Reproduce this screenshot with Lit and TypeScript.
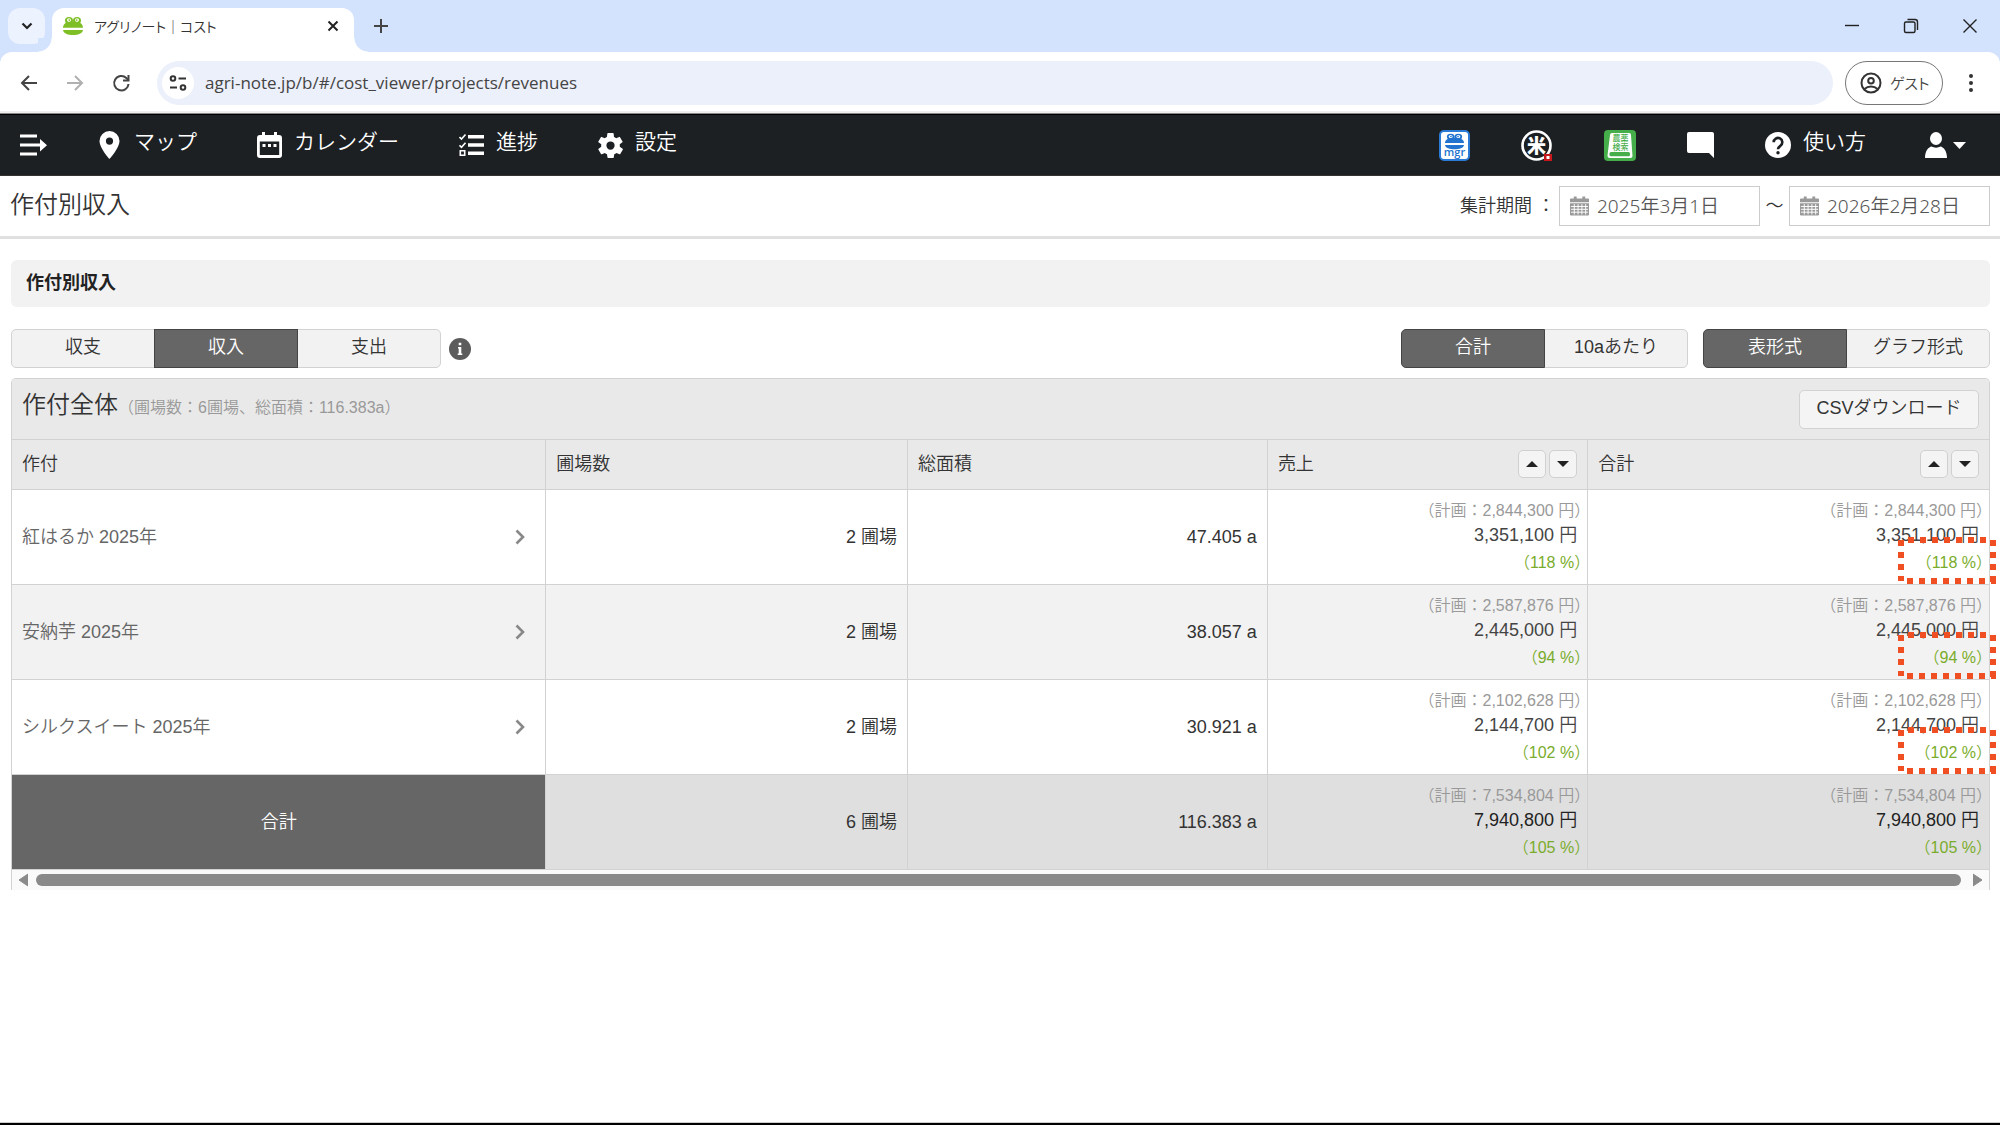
import { LitElement, html, css, svg } from "lit";
import { customElement, state } from "lit/decorators.js";
import { classMap } from "lit/directives/class-map.js";

interface Row {
  name: string;
  fields: string;
  area: string;
  plan: string;
  actual: string;
  rate: string;
}

const ROWS: Row[] = [
  { name: "紅はるか 2025年", fields: "2 圃場", area: "47.405 a", plan: "2,844,300", actual: "3,351,100", rate: "118" },
  { name: "安納芋 2025年", fields: "2 圃場", area: "38.057 a", plan: "2,587,876", actual: "2,445,000", rate: "94" },
  { name: "シルクスイート 2025年", fields: "2 圃場", area: "30.921 a", plan: "2,102,628", actual: "2,144,700", rate: "102" },
];

const TOTAL: Row = { name: "合計", fields: "6 圃場", area: "116.383 a", plan: "7,534,804", actual: "7,940,800", rate: "105" };

const frog = (body: string, eye: string) => svg`
  <g fill=${body}>
    <circle cx="7" cy="5" r="4"/><circle cx="15" cy="5" r="4"/>
    <path d="M1 13C1 8 5 6 11 6s10 2 10 7z"/>
    <path d="M1 15.500h20C20.500 19.500 16 21 11 21S1.500 19.500 1 15.500z"/>
  </g>
  <g fill=${eye}><circle cx="7" cy="4.500" r="2"/><circle cx="15" cy="4.500" r="2"/></g>
  <g fill=${body}><circle cx="7.300" cy="4.500" r="0.900"/><circle cx="14.700" cy="4.500" r="0.900"/></g>`;

const calendarIcon = html`<svg class="cal" viewBox="0 0 20 20" aria-hidden="true">
  <path fill="#999" d="M1 2h3V0h3v2h6V0h3v2h3a1 1 0 0 1 1 1v3H0V3a1 1 0 0 1 1-1zM0 7h20v12a1 1 0 0 1-1 1H1a1 1 0 0 1-1-1z"/>
  <path stroke="#fff" stroke-width="1" fill="none" d="M1 10.500h18M1 13.500h18M1 16.500h18M4.500 8v11M8.500 8v11M12.500 8v11M16.500 8v11"/>
</svg>`;

const calloutMark = html`<svg class="callout" width="98" height="47" viewBox="0 0 98 47" aria-hidden="true">
  <g stroke="#f04e23" stroke-width="6" stroke-dasharray="6 6" fill="none">
    <path d="M10 3H94"/><path d="M3 3V44"/><path d="M95 3V47"/><path d="M9 44H98"/>
  </g>
</svg>`;

@customElement("browser-chrome")
export class BrowserChrome extends LitElement {
  static styles = css`
    :host { display: block; font-family: "Noto Sans CJK JP", sans-serif; }
    button { border: 0; padding: 0; background: none; font: inherit; color: inherit; display: grid; place-items: center; }
    svg { display: block; }
    .strip { display: flex; align-items: center; height: 52px; background: #d3e2fd; padding: 0 8px; }
    .search { width: 37px; height: 36px; border-radius: 12px; background: #ecf2fe; }
    .tab { position: relative; align-self: flex-end; box-sizing: border-box; margin-left: 7px; width: 302px; height: 44px; border-radius: 12px 12px 0 0; background: #fff; display: flex; align-items: center; padding: 0 15px 8px 10px; gap: 10px; }
    .tab::before, .tab::after { content: ""; position: absolute; bottom: 0; width: 14px; height: 14px; }
    .tab::before { left: -14px; background: radial-gradient(circle at 0 0, #d3e2fd 13px, #fff 14px); }
    .tab::after { right: -14px; background: radial-gradient(circle at 100% 0, #d3e2fd 13px, #fff 14px); }
    .title { flex: 1; font-size: 14px; line-height: 20px; color: #333; font-feature-settings: "palt"; white-space: nowrap; }
    .plus { margin-left: 17px; width: 20px; height: 20px; }
    .win { margin-left: auto; display: flex; gap: 39px; padding-right: 12px; }
    .bar-wrap { background: #d3e2fd; }
    .bar { display: flex; align-items: center; height: 62px; box-sizing: border-box; padding: 0 17px; background: #fff; border-radius: 12px 12px 0 0; border-bottom: 1px solid #888; box-shadow: inset 0 -2px 0 #eee; }
    .arrows { display: flex; gap: 22px; margin-right: 24px; }
    .omni { flex: 1; display: flex; align-items: center; gap: 11px; height: 44px; border-radius: 22px; background: #ecf0fa; padding-left: 5px; }
    .site { width: 32px; height: 32px; border-radius: 50%; background: #fff; }
    .url { flex: 1; border: 0; background: none; outline: 0; padding: 0; font: 17px/24px "Open Sans", sans-serif; color: #444; }
    .guest { display: flex; align-items: center; gap: 8px; box-sizing: border-box; width: 98px; height: 44px; margin: 0 16px 0 12px; border: 1px solid #777; border-radius: 22px; padding: 0 0 0 14px; font-size: 15px; color: #444; font-feature-settings: "palt"; }
  `;

  render() {
    return html`
      <div class="strip">
        <button class="search" aria-label="タブを検索"><svg width="12" height="8" viewBox="0 0 12 8"><path d="M1.500 1.500L6 6l4.500-4.500" fill="none" stroke="#222" stroke-width="2.200"/></svg></button>
        <div class="tab">
          <svg width="22" height="20" viewBox="0 0 22 22" preserveAspectRatio="none">${frog("#7fbf26", "#fff")}</svg>
          <span class="title">アグリノート｜コスト</span>
          <button aria-label="タブを閉じる"><svg width="12" height="12" viewBox="0 0 12 12"><path d="M1.500 1.500l9 9m0-9l-9 9" stroke="#222" stroke-width="2"/></svg></button>
        </div>
        <button class="plus" aria-label="新しいタブ"><svg width="14" height="14" viewBox="0 0 14 14"><path d="M7 0v14M0 7h14" stroke="#444" stroke-width="2"/></svg></button>
        <div class="win">
          <button aria-label="最小化"><svg width="20" height="20" viewBox="0 0 20 20"><path d="M3 9.500h14" stroke="#222" stroke-width="1.400"/></svg></button>
          <button aria-label="元に戻す"><svg width="20" height="20" viewBox="0 0 20 20"><g fill="none" stroke="#222" stroke-width="1.400"><rect x="3.500" y="6" width="10.500" height="10.500" rx="1.500"/><path d="M6.500 3.500h7.500a2.500 2.500 0 0 1 2.500 2.500v8"/></g></svg></button>
          <button aria-label="閉じる"><svg width="20" height="20" viewBox="0 0 20 20"><path d="M3.500 3.500l13 13m0-13l-13 13" stroke="#222" stroke-width="1.400"/></svg></button>
        </div>
      </div>
      <div class="bar-wrap">
        <div class="bar">
          <div class="arrows">
            <button aria-label="戻る"><svg width="24" height="24" viewBox="0 0 24 24"><path d="M20 12H5m7-7l-7 7 7 7" fill="none" stroke="#444" stroke-width="2"/></svg></button>
            <button aria-label="進む"><svg width="24" height="24" viewBox="0 0 24 24"><path d="M4 12h15m-7-7l7 7-7 7" fill="none" stroke="#b0b0b0" stroke-width="2"/></svg></button>
            <button aria-label="再読み込み"><svg width="24" height="24" viewBox="0 0 24 24"><path d="M19.500 13a7.200 7.200 0 1 1-2.200-6L19.500 9" fill="none" stroke="#444" stroke-width="2"/><path d="M20.500 4v6.500H14v-2h4.500V4z" fill="#444"/></svg></button>
          </div>
          <div class="omni">
            <button class="site" aria-label="サイト情報"><svg width="18" height="18" viewBox="0 0 18 18"><g fill="none" stroke="#333" stroke-width="2"><circle cx="4" cy="4.500" r="2.300"/><path d="M9.500 4.500H17M1 13.500h7"/><circle cx="14" cy="13.500" r="2.300"/></g></svg></button>
            <input class="url" type="text" aria-label="アドレス" .value=${"agri-note.jp/b/#/cost_viewer/projects/revenues"} />
          </div>
          <button class="guest"><svg width="22" height="22" viewBox="0 0 22 22"><g fill="none" stroke="#333" stroke-width="2"><circle cx="11" cy="11" r="9.500"/><circle cx="11" cy="8.800" r="2.800"/><path d="M4.500 17c3.500-3.500 9.500-3.500 13 0"/></g></svg>ゲスト</button>
          <button aria-label="メニュー"><svg width="24" height="24" viewBox="0 0 24 24"><g fill="#333"><circle cx="12" cy="5" r="2"/><circle cx="12" cy="12" r="2"/><circle cx="12" cy="19" r="2"/></g></svg></button>
        </div>
      </div>`;
  }
}

@customElement("app-nav")
export class AppNav extends LitElement {
  static styles = css`
    :host { display: block; font-family: "Noto Sans CJK JP", sans-serif; }
    nav { display: flex; align-items: center; justify-content: space-between; height: 62px; padding: 0 34px 0 20px; border-top: 1px solid #000; border-bottom: 1px solid #333; box-sizing: border-box; background: #1c2023; }
    .group { display: flex; align-items: center; gap: 60px; }
    .right { gap: 51px; }
    a { display: flex; align-items: center; gap: 12px; color: #fff; text-decoration: none; font-size: 21px; line-height: 28px; font-weight: 350; }
    .menu { margin-right: -10px; }
    .user { gap: 6px; margin-left: 8px; }
    .label { padding-bottom: 10px; }
    svg { display: block; }
    .tiny { font: 500 8px/8px "Noto Sans CJK JP", sans-serif; }
    .mgr { font: 600 11px/11px "Open Sans", sans-serif; }
    .rice { font: 900 19px/19px "Noto Sans CJK JP", sans-serif; }
  `;

  render() {
    return html`<nav>
      <div class="group">
        <a class="menu" href="#menu" aria-label="メニューを開く"><svg width="27" height="24" viewBox="0 0 27 24"><path fill="#fff" d="M0 1.500h17v3H0zM0 10.500h20V6l7 6.200-7 6.200v-5H0zM0 19.500h17v3H0z"/></svg></a>
        <a href="#map"><svg width="25" height="28" viewBox="0 0 25 28"><path fill="#fff" fill-rule="evenodd" d="M12.500 0a10 10 0 0 0-10 10c0 7 10 18 10 18s10-11 10-18a10 10 0 0 0-10-10zm0 6.500a3.600 3.600 0 1 1 0 7.200 3.600 3.600 0 0 1 0-7.200z"/></svg><span class="label">マップ</span></a>
        <a href="#calendar"><svg width="25" height="26" viewBox="0 0 25 26"><path fill="#fff" fill-rule="evenodd" d="M3 3h2V0h3v3h9V0h3v3h2a3 3 0 0 1 3 3v17a3 3 0 0 1-3 3H3a3 3 0 0 1-3-3V6a3 3 0 0 1 3-3zm-.2 6.500V23h19.400V9.500z"/><path fill="#fff" d="M5.500 12h3v3h-3zM11 12h3v3h-3zM16.500 12h3v3h-3z"/></svg><span class="label">カレンダー</span></a>
        <a href="#progress"><svg width="25" height="24" viewBox="0 0 25 24"><path fill="#fff" d="M9 2h16v3.500H9zM9 10.300h16v3.500H9zM9 18.600h16v3.500H9z"/><path fill="none" stroke="#fff" stroke-width="1.600" d="M.5 4l2 2 4-4.500M.5 12.300l2 2 4-4.500M1.300 17.800h4.400v4.400H1.300z"/></svg><span class="label">進捗</span></a>
        <a href="#settings"><svg width="25" height="25" viewBox="2 2 20 20"><path fill="#fff" d="M19.400 13a7.500 7.500 0 0 0 0-2l2.100-1.600a.5.5 0 0 0 .1-.7l-2-3.400a.5.5 0 0 0-.6-.2l-2.500 1a7.300 7.300 0 0 0-1.700-1L14.500 2.400a.5.5 0 0 0-.5-.4h-4a.5.5 0 0 0-.5.400l-.4 2.700a7.300 7.300 0 0 0-1.700 1l-2.500-1a.5.5 0 0 0-.6.200l-2 3.400a.5.5 0 0 0 .1.700L4.600 11a7.500 7.500 0 0 0 0 2l-2.100 1.600a.5.5 0 0 0-.1.700l2 3.400c.1.200.4.300.6.200l2.500-1c.5.400 1.100.8 1.700 1l.4 2.700c0 .200.200.400.500.400h4c.3 0 .5-.2.500-.4l.4-2.700a7.300 7.300 0 0 0 1.700-1l2.500 1c.2.100.5 0 .6-.2l2-3.400a.5.5 0 0 0-.1-.7zM12 15.300a3.300 3.300 0 1 1 0-6.600 3.300 3.300 0 0 1 0 6.600z"/></svg><span class="label">設定</span></a>
      </div>
      <div class="group right">
        <a href="#manager" aria-label="マネージャー"><svg width="31" height="31" viewBox="0 0 31 31"><rect x="1" y="1" width="29" height="29" rx="4" fill="#fff" stroke="#2a7bd6" stroke-width="2"/><svg x="5" y="3" width="21" height="17" viewBox="0 0 22 22" preserveAspectRatio="none">${frog("#2173cf", "#fff")}</svg><text class="mgr" x="15.500" y="26" text-anchor="middle" fill="#2173cf">mgr</text></svg></a>
        <a href="#rice" aria-label="米"><svg width="32" height="31" viewBox="0 0 32 31"><circle cx="15.500" cy="15.500" r="14" fill="none" stroke="#fff" stroke-width="2.600"/><text class="rice" x="15.500" y="22.500" text-anchor="middle" fill="#fff">米</text><rect x="23" y="24" width="8" height="7" fill="#c8161d"/><rect x="25.500" y="26" width="3" height="3" fill="#fff"/></svg></a>
        <a href="#pesticide" aria-label="農薬検索"><svg width="32" height="31" viewBox="0 0 32 31"><rect width="32" height="31" rx="4" fill="#45ad49"/><path fill="#fff" d="M8 3h17a2 2 0 0 1 2 2l1.500 21a2 2 0 0 1-2 2H6a2.500 2.500 0 0 1-2.500-2.500L6 5a2 2 0 0 1 2-2z"/><rect x="5.500" y="22" width="20.500" height="4.200" rx="1.500" fill="#45ad49"/><text class="tiny" x="16.500" y="11" text-anchor="middle" fill="#45ad49">農薬</text><text class="tiny" x="16.500" y="19.500" text-anchor="middle" fill="#45ad49">検索</text></svg></a>
        <a href="#chat" aria-label="チャット"><svg width="27" height="26" viewBox="0 0 27 26"><path fill="#fff" d="M2 0h23a2 2 0 0 1 2 2v24l-5-5H2a2 2 0 0 1-2-2V2a2 2 0 0 1 2-2z"/></svg></a>
        <a href="#help"><svg width="26" height="26" viewBox="0 0 26 26"><circle cx="13" cy="13" r="13" fill="#fff"/><path d="M8.700 10.200a4.300 4.300 0 1 1 6.800 3.500c-1.600 1.200-2.500 1.800-2.500 3.600" fill="none" stroke="#1c2023" stroke-width="2.600"/><circle cx="13" cy="20.700" r="1.700" fill="#1c2023"/></svg><span class="label">使い方</span></a>
        <a class="user" href="#account" aria-label="アカウント"><svg width="22" height="26" viewBox="0 0 22 26"><ellipse cx="11" cy="6.500" rx="6" ry="6.500" fill="#fff"/><path d="M0 26c0-8 4-11 6.500-11.500 2.500 1.500 6.500 1.500 9 0C18 15 22 18 22 26z" fill="#fff"/></svg><svg width="13" height="7" viewBox="0 0 13 7"><path d="M0 0h13L6.500 7z" fill="#fff"/></svg></a>
      </div>
    </nav>`;
  }
}

@customElement("seg-control")
export class SegControl extends LitElement {
  static properties = { options: { type: Array }, selected: { type: Number } };
  declare options: string[];
  declare selected: number;

  constructor() {
    super();
    this.options = [];
    this.selected = 0;
  }

  static styles = css`
    :host { display: inline-flex; }
    button { box-sizing: border-box; width: 144px; height: 39px; margin: 0 0 0 -1px; padding: 0 0 3px; border: 1px solid #d2d2d2; background: #f2f2f2; color: #333; font: 350 18px/24px "Liberation Sans", "Noto Sans CJK JP", sans-serif; }
    button:first-child { margin-left: 0; border-radius: 5px 0 0 5px; }
    button:last-child { border-radius: 0 5px 5px 0; }
    .on { position: relative; background: #666; border-color: #444; color: #fff; }
  `;

  render() {
    return this.options.map(
      (label, i) => html`<button class=${classMap({ on: i === this.selected })} aria-pressed=${i === this.selected} @click=${() => (this.selected = i)}>${label}</button>`
    );
  }
}

@customElement("app-root")
export class AppRoot extends LitElement {
  @state() private from = "2025年3月1日";
  @state() private to = "2026年2月28日";

  static styles = css`
    :host { display: flex; flex-direction: column; min-height: 100vh; box-sizing: border-box; border-bottom: 2px solid #000; background: #fff; color: #333; font: 350 18px/24px "Liberation Sans", "Noto Sans CJK JP", sans-serif; }
    svg { display: block; }
    .head { display: flex; align-items: center; justify-content: space-between; height: 60px; padding: 0 10px; border-bottom: 3px solid #e0e0e0; }
    h1 { margin: 0; padding-bottom: 2px; font-size: 24px; line-height: 32px; font-weight: 350; }
    .period { display: flex; align-items: center; }
    .tilde { width: 29px; text-align: center; }
    .date { display: flex; align-items: center; gap: 8px; box-sizing: border-box; width: 201px; height: 40px; padding: 0 10px; border: 1px solid #ccc; }
    .cal { width: 19px; height: 20px; flex: none; }
    .date input { flex: 1; min-width: 0; border: 0; outline: 0; padding: 0; background: none; color: #555; font: 350 19px/26px "Noto Sans", "Noto Sans CJK JP", sans-serif; }
    .start { margin-right: 4px; }
    main { flex: 1; padding: 21px 10px 0 11px; border-bottom: 1px solid #ccc; }
    h2 { margin: 0; height: 47px; padding: 0 15px; border-radius: 6px; background: #f2f2f2; font-size: 18px; line-height: 46px; font-weight: 700; color: #222; }
    .tools { display: flex; align-items: center; margin: 22px 0 10px; }
    .info { border: 0; padding: 0; margin-left: 8px; background: none; }
    .spacer { flex: 1; }
    .second { margin-left: 15px; }
    .panel { border: 1px solid #d2d2d2; border-bottom: 0; border-radius: 5px 5px 0 0; }
    .panel-head { display: flex; align-items: center; justify-content: space-between; height: 60px; padding: 0 10px; background: #e9e9e9; border-radius: 4px 4px 0 0; }
    .panel-title { padding-bottom: 6px; font-size: 24px; line-height: 32px; }
    .panel-title small { font-size: 16px; color: #999; }
    .csv { width: 180px; height: 39px; border: 1px solid #d2d2d2; border-radius: 5px; background: #f4f4f4; color: #333; font: inherit; padding: 0 0 2px; }
    table { width: 100%; table-layout: fixed; border-collapse: collapse; }
    .c1 { width: 27%; } .c2 { width: 18.3%; } .c3 { width: 18.2%; } .c4 { width: 16.2%; } .c5 { width: 20.3%; }
    th, td { box-sizing: border-box; padding: 0 10px; border: 1px solid #d2d2d2; }
    th:first-child, td:first-child { border-left: 0; }
    th:last-child, td:last-child { border-right: 0; }
    thead th { height: 50px; background: #e9e9e9; text-align: left; font-weight: 350; }
    .th { display: flex; align-items: center; justify-content: space-between; padding-bottom: 2px; }
    .sorts { display: flex; gap: 3px; }
    .sort { display: grid; place-items: center; width: 28px; height: 28px; padding: 0; border: 1px solid #d0d0d0; border-radius: 5px; background: #f4f4f4; }
    tbody td, tbody th { height: 95px; }
    tbody tr:nth-child(even) { background: #f2f2f2; }
    .num { text-align: right; }
    .money { position: relative; padding: 3px 10px 0; text-align: right; color: #444; }
    .row-link { display: flex; align-items: center; justify-content: space-between; padding-right: 10px; color: #666; text-decoration: none; }
    .plan, .rate { font-size: 16px; margin-right: -13px; color: #999; white-space: nowrap; }
    .rate { line-height: 31px; color: #7aac2b; }
    .callout { position: absolute; right: -7px; bottom: 0; }
    tbody tr.total { background: #dfdfdf; }
    .total .money { color: #222; }
    .total th { background: #666; color: #fff; font-weight: 350; }
    .scroll { display: flex; align-items: center; gap: 8px; height: 20px; padding: 0 6px; background: #fafafa; }
    .thumb { flex: 1; height: 12px; margin-right: 4px; border-radius: 6px; background: #8a8a8a; }
  `;

  private money(r: Row, callout = false) {
    return html`<td class="money">
      <div class="plan">（計画：${r.plan} 円）</div>
      <div>${r.actual} 円</div>
      <div class="rate">（${r.rate} %）</div>
      ${callout ? calloutMark : ""}
    </td>`;
  }

  private sortable(label: string) {
    return html`<th scope="col"><div class="th">${label}
      <div class="sorts">
        <button class="sort" aria-label="${label} 昇順"><svg width="12" height="6" viewBox="0 0 12 6"><path d="M0 6h12L6 0z" fill="#222"/></svg></button>
        <button class="sort" aria-label="${label} 降順"><svg width="12" height="6" viewBox="0 0 12 6"><path d="M0 0h12L6 6z" fill="#222"/></svg></button>
      </div></div></th>`;
  }

  render() {
    return html`
      <browser-chrome></browser-chrome>
      <app-nav></app-nav>
      <header class="head">
        <h1>作付別収入</h1>
        <div class="period">
          <label class="start" for="from">集計期間 ：</label>
          <div class="date">${calendarIcon}<input id="from" type="text" .value=${this.from} /></div>
          <label class="tilde" for="to">～</label>
          <div class="date">${calendarIcon}<input id="to" type="text" .value=${this.to} /></div>
        </div>
      </header>
      <main>
        <h2>作付別収入</h2>
        <div class="tools">
          <seg-control .options=${["収支", "収入", "支出"]} .selected=${1}></seg-control>
          <button class="info" aria-label="説明"><svg width="22" height="22" viewBox="0 0 22 22"><circle cx="11" cy="11" r="11" fill="#5c5c5c"/><path fill="#fff" d="M9.700 4.800h2.600v2.400H9.700zM9 9h3.300v6.500h1V17H8.700v-1.500h1v-5H9z"/></svg></button>
          <span class="spacer"></span>
          <seg-control .options=${["合計", "10aあたり"]} .selected=${0}></seg-control>
          <seg-control class="second" .options=${["表形式", "グラフ形式"]} .selected=${0}></seg-control>
        </div>
        <section class="panel">
          <div class="panel-head">
            <div class="panel-title">作付全体<small>（圃場数：6圃場、総面積：116.383a）</small></div>
            <button class="csv">CSVダウンロード</button>
          </div>
          <table>
            <colgroup><col class="c1" /><col class="c2" /><col class="c3" /><col class="c4" /><col class="c5" /></colgroup>
            <thead>
              <tr>
                <th scope="col"><div class="th">作付</div></th>
                <th scope="col"><div class="th">圃場数</div></th>
                <th scope="col"><div class="th">総面積</div></th>
                ${this.sortable("売上")}${this.sortable("合計")}
              </tr>
            </thead>
            <tbody>
              ${ROWS.map(
                (r) => html`<tr>
                  <td><a class="row-link" href="#detail">${r.name}<svg width="10" height="16" viewBox="0 0 10 16"><path d="M1.500 1.500L8 8l-6.500 6.500" fill="none" stroke="#888" stroke-width="2.600"/></svg></a></td>
                  <td class="num">${r.fields}</td>
                  <td class="num">${r.area}</td>
                  ${this.money(r)}${this.money(r, true)}
                </tr>`
              )}
              <tr class="total">
                <th scope="row">${TOTAL.name}</th>
                <td class="num">${TOTAL.fields}</td>
                <td class="num">${TOTAL.area}</td>
                ${this.money(TOTAL)}${this.money(TOTAL)}
              </tr>
            </tbody>
          </table>
          <div class="scroll">
            <svg width="10" height="14" viewBox="0 0 10 14"><path d="M10 1v12L1 7z" fill="#8a8a8a" stroke="#8a8a8a" stroke-linejoin="round"/></svg>
            <div class="thumb"></div>
            <svg width="10" height="14" viewBox="0 0 10 14"><path d="M0 1v12l9-6z" fill="#8a8a8a" stroke="#8a8a8a" stroke-linejoin="round"/></svg>
          </div>
        </section>
      </main>`;
  }
}
